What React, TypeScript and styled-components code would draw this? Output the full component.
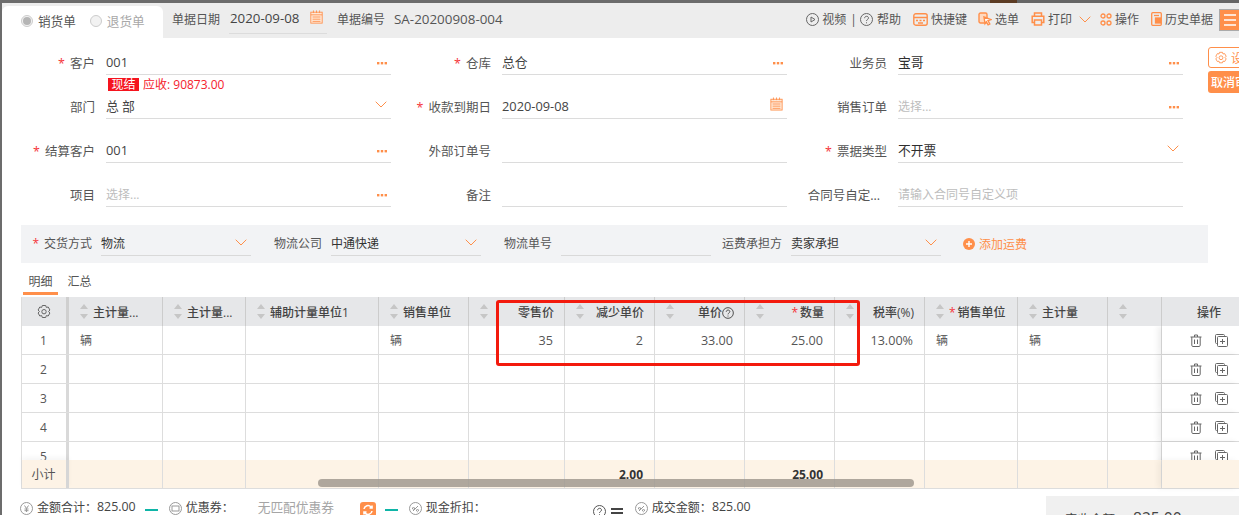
import React from "react";
import styled, { createGlobalStyle } from "styled-components";

const orange = "#ff8f4a";
const COLS = "47px 94px 83px 133px 90px 96px 90px 90px 90px 90px 93px 90px 54px 77px";

const Global = createGlobalStyle`
  html, body { margin: 0; padding: 0; }
  body { background: #666; overflow: hidden; }
  #root { width: 1239px; height: 515px; overflow: hidden; }
  * { box-sizing: border-box; }
`;

const Page = styled.div`
  width: 1239px; height: 515px; overflow: hidden;
  background: linear-gradient(90deg, #6c6c6c 0 990px, #5c3c24 990px 1017px, #666 1017px 100%);
  padding: 3px 0 0 2px;
  font-family: "Open Sans", "Noto Sans CJK SC", sans-serif;
  font-size: 12px; color: #555;
`;
const Modal = styled.div`
  width: 1237px; height: 512px; background: #fff; overflow: hidden;
`;
const Head = styled.header`
  height: 35px; background: #ededed; display: flex; align-items: flex-end;
`;
const TypeTab = styled.div`
  width: 161px; height: 32px; background: #fff; border-radius: 6px 6px 0 0;
  display: flex; align-items: center; padding: 0 0 3px 19px; flex: none;
`;
const Radio = styled.span<{ $on?: boolean }>`
  width: 12px; height: 12px; border-radius: 50%; border: 1px solid #ccc; background: #f2f2f2;
  display: inline-flex; align-items: center; justify-content: center; margin-right: 5px;
  &::after { content: ""; width: 8px; height: 8px; border-radius: 50%; background: ${p => (p.$on ? "#b5b5b5" : "transparent")}; }
`;
const RadioText = styled.span<{ $off?: boolean }>`
  font-size: 12.6px; color: ${p => (p.$off ? "#a8a8a8" : "#555")}; margin-right: ${p => (p.$off ? 0 : 14)}px;
`;
const HeadInfo = styled.div`
  flex: 1; height: 35px; display: flex; align-items: center; padding-bottom: 3px; min-width: 0;
`;
const HeadLabel = styled.span<{ $ml: number }>`
  margin-left: ${p => p.$ml}px; color: #555; white-space: nowrap;
`;
const DateBox = styled.div`
  width: 98px; height: 24px; margin: 5px 0 0 9px; border-bottom: 1px solid #dcdcdc;
  display: flex; align-items: flex-start; justify-content: space-between; padding: 0 3px 0 1px;
  font-size: 13.3px; color: #444; line-height: 16px;
`;
const Serial = styled.span`
  margin-left: 9px; font-size: 13.4px; color: #555; white-space: nowrap;
`;
const Tools = styled.div`
  margin: 0 -2px 0 auto; display: flex; align-items: center; white-space: nowrap;
`;
const Tool = styled.span<{ $ml: number; $gap?: number }>`
  margin-left: ${p => p.$ml}px; display: inline-flex; align-items: center; gap: ${p => p.$gap ?? 3}px; color: #555;
`;
const MenuBtn = styled.span`
  margin-left: 6px; width: 22px; height: 22px; background: ${orange}; border: 1px solid #aaa;
  display: inline-flex; align-items: center; justify-content: center; margin-top: 1px; flex: none;
`;
const FormArea = styled.section`
  display: flex; align-items: flex-start; padding: 7px 0 0 4px;
`;
const FormGrid = styled.div`
  display: grid; grid-template-columns: repeat(3, 385px); column-gap: 11px; row-gap: 14px; flex: none;
`;
const FieldRow = styled.div`
  display: flex; height: 30px;
`;
const FieldLabel = styled.label<{ $pr?: number }>`
  width: 89px; margin-right: 11px; padding-right: ${p => p.$pr ?? 0}px; text-align: right; color: #555; padding-top: 10px; line-height: 17px;
  font-size: 12.5px; white-space: nowrap; display: flex; justify-content: flex-end;
`;
const Star = styled.i<{ $tight?: boolean }>`
  color: #f5343a; font-style: normal; margin-right: ${p => (p.$tight ? 2 : 5)}px;
`;
const FieldBox = styled.div`
  position: relative; flex: 1; border-bottom: 1px solid #dcdcdc;
  display: flex; align-items: flex-start; justify-content: space-between;
  padding-top: 9px; line-height: 17px; color: #444;
`;
const FieldValue = styled.span<{ $dark?: boolean }>`
  font-size: 12.8px; color: ${p => (p.$dark ? "#2e2e2e" : "#444")};
`;
const Placeholder = styled.span`
  color: #bdbdbd;
`;
const TrailIcon = styled.span<{ $mt: number }>`
  display: inline-flex; margin-right: 4px; margin-top: ${p => p.$mt}px; flex: none;
`;
const Debt = styled.div`
  position: absolute; left: 2px; top: 33px; display: flex; align-items: center; gap: 4px; color: #f5222d; white-space: nowrap; line-height: 13px;
`;
const DebtTag = styled.span`
  background: #f5141e; color: #fff; width: 31px; height: 13px; text-align: center; line-height: 13px;
`;
const Side = styled.div`
  margin: 2px 0 0 25px; display: flex; flex-direction: column; gap: 3px; flex: none; width: 60px;
`;
const SideOutline = styled.span`
  height: 21px; border: 1px solid ${orange}; border-radius: 3px; color: ${orange};
  display: flex; align-items: center; padding-left: 5px; gap: 3px; white-space: nowrap;
`;
const SideSolid = styled.span`
  height: 22px; background: ${orange}; border-radius: 3px; color: #fff; font-weight: 500;
  display: flex; align-items: center; padding-left: 3px; white-space: nowrap;
`;
const Band = styled.section`
  margin: 18px 0 0 19px; width: 1187px; height: 38px; background: #f2f3f5; display: flex; align-items: flex-start; padding-top: 1px;
`;
const BandLabel = styled.span<{ $w: number }>`
  width: ${p => p.$w}px; text-align: right; margin-right: 9px; padding-top: 9px; line-height: 17px; color: #555; white-space: nowrap; flex: none;
`;
const BandField = styled.div`
  width: 150px; height: 30px; border-bottom: 1px solid #d9d9d9; display: flex; justify-content: space-between;
  padding-top: 9px; line-height: 17px; color: #333; flex: none;
`;
const AddFee = styled.span`
  margin-left: 22px; padding-top: 10px; line-height: 17px; color: ${orange}; display: inline-flex; gap: 4px; align-items: flex-start;
`;
const AddDot = styled.svg`
  margin-top: 2px;
`;
const Tabs = styled.nav`
  display: flex; margin: 9px 0 2px 21px; height: 23px;
`;
const TabItem = styled.span<{ $on?: boolean }>`
  padding: 0 5px; width: 35px; height: 23px; line-height: 19px; text-align: center; color: #555;
  border-bottom: 3px solid ${p => (p.$on ? orange : "transparent")}; white-space: nowrap; margin-right: 4px;
`;
const TableWrap = styled.div`
  position: relative; margin-left: 19px; width: 1218px; border-left: 1px solid #ddd;
`;
const HeadRow = styled.div`
  display: grid; grid-template-columns: ${COLS}; height: 29px; background: #e6e7e9;
`;
const HeadCell = styled.div<{ $right?: boolean }>`
  border-right: 1px solid #ccc; display: flex; align-items: center; padding: 0 10px 0 11px; gap: 5px;
  font-weight: 500; color: #444; white-space: nowrap; overflow: hidden;
  & > b { font-weight: 500; flex: 1; text-align: ${p => (p.$right ? "right" : "left")}; }
`;
const SeqHead = styled.div`
  border-right: 3px solid #cfcfcf; display: flex; align-items: center; justify-content: center; padding-right: 1px;
`;
const OpHead = styled.div`
  display: flex; align-items: center; padding-left: 35px; font-weight: 500; color: #444;
`;
const Body = styled.div`
  height: 134px; overflow: hidden;
`;
const DataRow = styled.div`
  display: grid; grid-template-columns: ${COLS}; height: 29px; border-bottom: 1px solid #ddd;
`;
const Seq = styled.div`
  border-right: 3px solid #d9d9d9; display: flex; align-items: center; justify-content: center; padding-right: 1px; color: #555;
`;
const Cell = styled.div<{ $right?: boolean }>`
  border-right: 1px solid #ddd; display: flex; align-items: center; padding: 0 11px;
  justify-content: ${p => (p.$right ? "flex-end" : "flex-start")}; color: #555; font-size: ${p => (p.$right ? 12.6 : 12)}px;
`;
const OpCell = styled.div`
  display: flex; align-items: center; padding: 1px 0 0 28px; gap: 13px; box-shadow: -4px 0 6px rgba(0,0,0,.07); background: #fff;
`;
const Summary = styled.div`
  display: grid; grid-template-columns: ${COLS}; height: 29px; background: #fdf3e6; border-bottom: 1px solid #ddd;
`;
const SumCell = styled(Cell)`
  font-weight: 700; color: #333; font-size: 12px; padding-top: 1px;
`;
const SumSeq = styled(Seq)`
  border-right-color: #d6d6d6; box-shadow: 0 -3px 5px rgba(0,0,0,.04);
`;
const SumOp = styled.div`
  box-shadow: -4px 0 6px rgba(0,0,0,.05);
`;
const ScrollThumb = styled.div`
  position: absolute; left: 296px; top: 182px; width: 596px; height: 8px; border-radius: 4px; background: rgba(158,150,140,.82);
`;
const RedBox = styled.div`
  position: absolute; left: 474px; top: 3px; width: 364px; height: 66px; border: 3px solid #f31a0d; border-radius: 3px;
`;
const Footer = styled.footer`
  display: flex; align-items: flex-start; height: 30px; padding-left: 18px;
`;
const FootText = styled.span<{ $ml?: number; $gray?: boolean }>`
  margin-left: ${p => p.$ml ?? 0}px; padding-top: 10px; line-height: 17px; white-space: nowrap; flex: none;
  font-size: ${p => (p.$gray ? 12.7 : 12)}px; color: ${p => (p.$gray ? "#a5a5a5" : "#444")};
`;
const FootNum = styled.span`
  padding-top: 9px; font-size: 12.4px; line-height: 17px; color: #444; flex: none;
`;
const FootIcon = styled.span<{ $ml?: number; $pt?: number }>`
  margin-left: ${p => p.$ml ?? 0}px; padding-top: ${p => p.$pt ?? 13}px; margin-right: 4px; display: inline-flex; flex: none;
`;
const Minus = styled.i<{ $ml: number }>`
  margin: 20px 0 0 ${p => p.$ml}px; width: 13px; height: 2px; background: #0fb5a7; display: block; flex: none;
`;
const Equal = styled.i`
  margin: 19px 0 0 1px; width: 12px; height: 6px; border-top: 2px solid #444; border-bottom: 2px solid #444; display: block; flex: none;
`;
const Refresh = styled.span`
  margin: 13px 0 0 26px; width: 16px; height: 16px; border-radius: 3px; background: ${orange}; color: #fff; display: inline-flex; align-items: center; justify-content: center; flex: none;
`;
const Paid = styled.div`
  margin-left: auto; width: 193px; height: 40px; margin-top: 7px; background: #f0f0f0; padding: 14px 0 0 19px; font-size: 12.5px; line-height: 16px; color: #444; white-space: nowrap; flex: none;
`;
const PaidNum = styled.span`
  margin-left: 18px; font-size: 15.6px;
`;

const Calendar = ({ w = 15, h = 14 }: { w?: number; h?: number }) => (
  <svg width={w} height={h} viewBox="0 0 15 16" fill="none" stroke={orange}>
    <rect x="1" y="2.5" width="13" height="12.5" fill="#ffe9d8" />
    <path d="M1 5.500h13M4 .5v3M7.500.5v3M11 .5v3M3 8h9M3 10.500h9M3 13h9" />
  </svg>
);
const Dots = () => (
  <svg width="10" height="3" viewBox="0 0 10 3" fill={orange}>
    <rect width="2.4" height="2.4" /><rect x="3.8" width="2.4" height="2.4" /><rect x="7.6" width="2.4" height="2.4" />
  </svg>
);
const Chev = ({ w = 12 }: { w?: number }) => (
  <svg width={w} height="7" viewBox="0 0 12 7" fill="none" stroke={orange}><path d="M.7.7 6 6l5.300-5.300" /></svg>
);
const Sort = () => (
  <svg width="8" height="15" viewBox="0 0 8 15" fill="#c6c6c6" style={{ flex: "none" }}>
    <path d="M4 0l4 5H0zM0 10h8l-4 5z" />
  </svg>
);
const Gear = ({ c = "#666", s = 16 }: { c?: string; s?: number }) => (
  <svg width={s} height={s} viewBox="0 0 16 16" fill="none" stroke={c}>
    <path d="M6.300 1.500h3.400l.6 1.900 1.900-.4 1.700 3-1.300 1.500 1.300 1.500-1.700 3-1.900-.4-.6 1.900H6.300l-.6-1.900-1.900.4-1.700-3L3.400 7.500 2.100 6l1.700-3 1.900.4z" />
    <circle cx="8" cy="7.700" r="2.200" />
  </svg>
);
const Ring = ({ children, c = "#666" }: { children: React.ReactNode; c?: string }) => (
  <svg width="13" height="13" viewBox="0 0 13 13" fill="none" stroke={c}>
    <circle cx="6.500" cy="6.500" r="6" />
    {children}
  </svg>
);
const Trash = () => (
  <svg width="12" height="13" viewBox="0 0 12 13" fill="none" stroke="#666">
    <path d="M.5 3h11M4.500 3V1h3v2M1.800 3v8.300c0 .7.5 1.200 1.200 1.200h6c.7 0 1.200-.5 1.200-1.200V3M4.500 5.500v4.500M7.500 5.500v4.500" />
  </svg>
);
const CopyAdd = () => (
  <svg width="13" height="13" viewBox="0 0 13 13" fill="none" stroke="#666">
    <path d="M9.500 1.800V1.500c0-.6-.4-1-1-1h-7c-.6 0-1 .4-1 1v7c0 .6.4 1 1 1h.3" />
    <rect x="2.500" y="2.500" width="10" height="10" rx="1" />
    <path d="M7.500 5v5M5 7.500h5" />
  </svg>
);
const KeyIcon = () => (
  <svg width="15" height="13" viewBox="0 0 15 13" fill="none" stroke={orange} strokeWidth="1.4">
    <rect x=".8" y=".8" width="13.400" height="11.400" rx="2" />
    <path d="M1 4.500h13M3 7.500h2M6.500 7.500h2M10 7.500h2M5 10h5" />
  </svg>
);
const PickIcon = () => (
  <svg width="14" height="14" viewBox="0 0 14 14" fill="none" stroke={orange} strokeWidth="1.4">
    <rect x="1" y="1" width="8" height="10" rx="1.500" fill="#ffd9bf" />
    <path d="M6 5l7 2.600-3 1 1.800 3.400-1.700.9-1.700-3.200L7 11.600z" fill="#fff" />
  </svg>
);
const PrintIcon = () => (
  <svg width="14" height="14" viewBox="0 0 14 14" fill="none" stroke={orange} strokeWidth="1.5">
    <path d="M3.500 4V1h7v3M3.500 10.500H1.200V4.300h11.600v6.200h-2.300" />
    <rect x="3.500" y="8" width="7" height="5" />
  </svg>
);
const GridIcon = () => (
  <svg width="12" height="13" viewBox="0 0 12 13" fill="none" stroke={orange} strokeWidth="1.3">
    <circle cx="3" cy="3" r="2" /><circle cx="9" cy="3" r="2" /><circle cx="3" cy="10" r="2" /><circle cx="9" cy="10" r="2" />
  </svg>
);
const HistoryIcon = () => (
  <svg width="11" height="14" viewBox="0 0 11 14" fill="none" stroke={orange} strokeWidth="1.3">
    <rect x=".7" y=".7" width="9.600" height="12.600" rx="1" />
    <path d="M3 3.500h5" /><rect x="4.500" y="6" width="5" height="5" fill={orange} />
  </svg>
);
const qMark = "M4.600 5.200c0-2.500 3.900-2.500 3.900-.2 0 1.400-2 1.500-2 3M6.500 9.300v1";
const tagMark = "M4 9l5-5M4.500 5.500a1 1 0 1 0 .01 0M8.500 7.500a1 1 0 1 0 .01 0";

type F = { label: string; req?: boolean; value?: string; ph?: string; dark?: boolean; icon?: "dots" | "chev" | "cal" | "none"; debt?: boolean; pr?: number };
const fields: F[] = [
  { label: "客户", req: true, value: "001", icon: "dots", debt: true },
  { label: "仓库", req: true, value: "总仓", icon: "dots" },
  { label: "业务员", value: "宝哥", dark: true, icon: "dots" },
  { label: "部门", value: "总 部", icon: "chev" },
  { label: "收款到期日", req: true, value: "2020-09-08", icon: "cal" },
  { label: "销售订单", ph: "选择...", icon: "dots" },
  { label: "结算客户", req: true, value: "001", icon: "dots" },
  { label: "外部订单号", icon: "none" },
  { label: "票据类型", req: true, value: "不开票", dark: true, icon: "chev" },
  { label: "项目", ph: "选择...", icon: "dots" },
  { label: "备注", icon: "none" },
  { label: "合同号自定...", ph: "请输入合同号自定义项", icon: "none", pr: 7 },
];

const headers: { t: React.ReactNode; right?: boolean }[] = [
  { t: "主计量..." },
  { t: "主计量..." },
  { t: "辅助计量单位1" },
  { t: "销售单位" },
  { t: "零售价", right: true },
  { t: "减少单价", right: true },
  { t: <>单价<svg width="12" height="12" viewBox="0 0 13 13" fill="none" stroke="#444" style={{ verticalAlign: -2 }}><circle cx="6.500" cy="6.500" r="5.800" /><path d={qMark} /></svg></>, right: true },
  { t: <><Star $tight>*</Star>数量</>, right: true },
  { t: "税率(%)", right: true },
  { t: <><Star $tight>*</Star>销售单位</> },
  { t: "主计量" },
  { t: "" },
];

const rowOne: string[] = ["辆", "", "", "辆", "35", "2", "33.00", "25.00", "13.00%", "辆", "辆", ""];
const numeric = [4, 5, 6, 7, 8];

const trailTop = (icon?: F["icon"]) => (icon === "dots" ? 8 : icon === "chev" ? 3 : -1);

export default function App() {
  return (
    <Page>
      <Global />
      <Modal>
        <Head>
          <TypeTab>
            <Radio $on /><RadioText>销货单</RadioText>
            <Radio /><RadioText $off>退货单</RadioText>
          </TypeTab>
          <HeadInfo>
            <HeadLabel $ml={9}>单据日期</HeadLabel>
            <DateBox>2020-09-08<Calendar /></DateBox>
            <HeadLabel $ml={10}>单据编号</HeadLabel>
            <Serial>SA-20200908-004</Serial>
            <Tools>
              <Tool $ml={0}><Ring><path d="M5 4l4 2.500L5 9z" /></Ring>视频</Tool>
              <Tool $ml={4}>|</Tool>
              <Tool $ml={3} $gap={4}><Ring><path d={qMark} /></Ring>帮助</Tool>
              <Tool $ml={12}><KeyIcon />快捷键</Tool>
              <Tool $ml={11}><PickIcon />选单</Tool>
              <Tool $ml={12}><PrintIcon />打印</Tool>
              <Tool $ml={7}><Chev /></Tool>
              <Tool $ml={9}><GridIcon />操作</Tool>
              <Tool $ml={12}><HistoryIcon />历史单据</Tool>
              <MenuBtn>
                <svg width="14" height="12" viewBox="0 0 14 12" stroke="#fff" strokeWidth="1.4"><path d="M1 1h12M1 6h12M1 11h12" /></svg>
              </MenuBtn>
            </Tools>
          </HeadInfo>
        </Head>

        <FormArea>
          <FormGrid>
            {fields.map(f => (
              <FieldRow key={f.label}>
                <FieldLabel $pr={f.pr}>{f.req && <Star>*</Star>}{f.label}</FieldLabel>
                <FieldBox>
                  {f.ph ? <Placeholder>{f.ph}</Placeholder> : <FieldValue $dark={f.dark}>{f.value}</FieldValue>}
                  {f.icon !== "none" && (
                    <TrailIcon $mt={trailTop(f.icon)}>
                      {f.icon === "dots" ? <Dots /> : f.icon === "chev" ? <Chev /> : <Calendar w={13} h={14} />}
                    </TrailIcon>
                  )}
                  {f.debt && <Debt><DebtTag>现结</DebtTag>应收: 90873.00</Debt>}
                </FieldBox>
              </FieldRow>
            ))}
          </FormGrid>
          <Side>
            <SideOutline><Gear c={orange} s={14} />设置</SideOutline>
            <SideSolid>取消审核</SideSolid>
          </Side>
        </FormArea>

        <Band>
          <BandLabel $w={71}><Star>*</Star>交货方式</BandLabel>
          <BandField>物流<TrailIcon $mt={4}><Chev /></TrailIcon></BandField>
          <BandLabel $w={71}>物流公司</BandLabel>
          <BandField>中通快递<TrailIcon $mt={4}><Chev /></TrailIcon></BandField>
          <BandLabel $w={71}>物流单号</BandLabel>
          <BandField />
          <BandLabel $w={71}>运费承担方</BandLabel>
          <BandField>卖家承担<TrailIcon $mt={4}><Chev /></TrailIcon></BandField>
          <AddFee>
            <AddDot width="12" height="12" viewBox="0 0 12 12"><circle cx="6" cy="6" r="6" fill={orange} /><path d="M3 6h6M6 3v6" stroke="#fff" strokeWidth="1.4" /></AddDot>
            添加运费
          </AddFee>
        </Band>

        <Tabs>
          <TabItem $on>明细</TabItem>
          <TabItem>汇总</TabItem>
        </Tabs>

        <TableWrap>
          <HeadRow>
            <SeqHead><Gear /></SeqHead>
            {headers.map((h, i) => (
              <HeadCell key={i} $right={h.right}><Sort /><b>{h.t}</b></HeadCell>
            ))}
            <OpHead>操作</OpHead>
          </HeadRow>
          <Body>
            {[1, 2, 3, 4, 5].map(n => (
              <DataRow key={n}>
                <Seq>{n}</Seq>
                {rowOne.map((v, i) => (
                  <Cell key={i} $right={numeric.includes(i)}>{n === 1 ? v : ""}</Cell>
                ))}
                <OpCell><Trash /><CopyAdd /></OpCell>
              </DataRow>
            ))}
          </Body>
          <Summary>
            <SumSeq>小计</SumSeq>
            {rowOne.map((_, i) => (
              <SumCell key={i} $right>{i === 5 ? "2.00" : i === 7 ? "25.00" : ""}</SumCell>
            ))}
            <SumOp />
          </Summary>
          <ScrollThumb />
          <RedBox />
        </TableWrap>

        <Footer>
          <FootIcon><Ring c="#999"><path d="M4.500 3.500l2 3 2-3M6.500 6.500v3.500M4.500 7h4M4.500 8.700h4" /></Ring></FootIcon>
          <FootText>金额合计：</FootText>
          <FootNum>825.00</FootNum>
          <Minus $ml={9} />
          <FootIcon $ml={11}><Ring c="#999"><rect x="3" y="4" width="7" height="5" /></Ring></FootIcon>
          <FootText>优惠券：</FootText>
          <FootText $ml={24} $gray>无匹配优惠券</FootText>
          <Refresh>
            <svg width="12" height="12" viewBox="0 0 12 12" fill="none" stroke="#fff" strokeWidth="1.6"><path d="M2 5a4 4 0 0 1 7-2l1 1M10 7a4 4 0 0 1-7 2L2 8M10 1.500V4H7.500M2 10.500V8h2.500" /></svg>
          </Refresh>
          <Minus $ml={9} />
          <FootIcon $ml={11}><Ring c="#999"><path d={tagMark} /></Ring></FootIcon>
          <FootText>现金折扣：</FootText>
          <FootIcon $ml={107} $pt={16}><Ring c="#555"><path d={qMark} /></Ring></FootIcon>
          <Equal />
          <FootIcon $ml={12}><Ring c="#999"><path d={tagMark} /></Ring></FootIcon>
          <FootText>成交金额：</FootText>
          <FootNum>825.00</FootNum>
          <Paid>实收金额<PaidNum>825.00</PaidNum></Paid>
        </Footer>
      </Modal>
    </Page>
  );
}
